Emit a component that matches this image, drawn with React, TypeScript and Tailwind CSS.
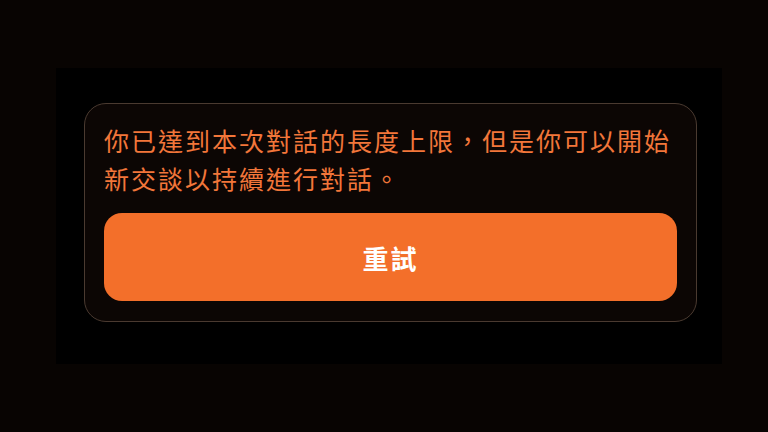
export default function App() {
  return (
    <div
      className="w-[768px] h-[432px] bg-[#080402] pt-[68px] pl-[56px]"
      style={{ fontFamily: '"Noto Sans CJK TC", "Noto Sans", sans-serif' }}
    >
      <div className="w-[666px] h-[296px] bg-black pt-[35px] pl-[28px]">
        <div className="w-[613px] h-[219px] rounded-[22px] border border-[#4a3a30] bg-[#0c0604] px-[19px] pt-[17px] flex flex-col">
          <p className="text-[25px] leading-[38px] tracking-[2px] text-[#f2763a] font-normal">
            你已達到本次對話的長度上限，但是你可以開始新交談以持續進行對話。
          </p>
          <button className="mt-[16px] h-[88px] w-full rounded-[18px] bg-[#f36f2a] text-white text-[26px] tracking-[2px] font-semibold">
            重試
          </button>
        </div>
      </div>
    </div>
  )
}
